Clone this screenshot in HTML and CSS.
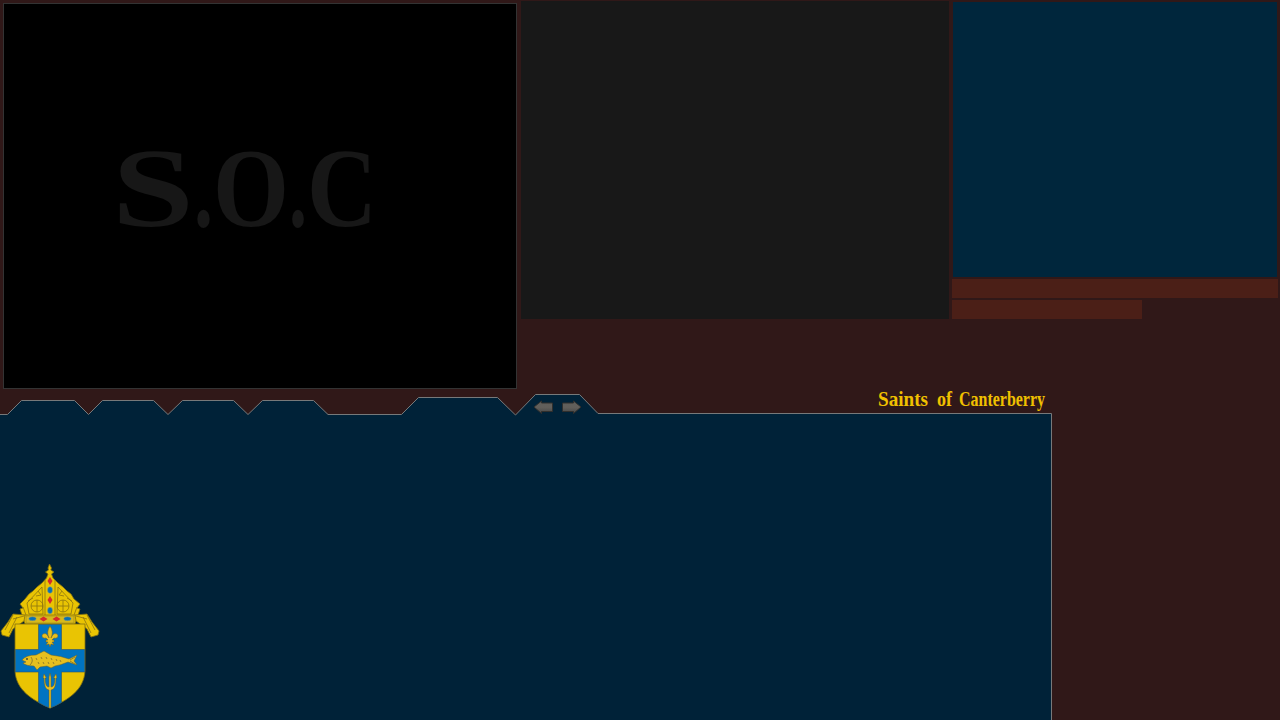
FILE: index.html
```html
<!DOCTYPE html>
<html lang="en">
<head>
<meta charset="utf-8">
<title>Saints of Canterberry</title>
<link rel="stylesheet" href="styles.css">
</head>
<body>
<main class="page">
  <section class="top">
    <div class="map">
      <svg class="monogram" width="260" height="110" viewBox="0 -20 260 110">
        <text y="76"><tspan x="-3" textLength="82" lengthAdjust="spacingAndGlyphs">S</tspan><tspan x="79" textLength="19" lengthAdjust="spacingAndGlyphs">.</tspan><tspan x="98" textLength="76" lengthAdjust="spacingAndGlyphs">O</tspan><tspan x="174" textLength="18" lengthAdjust="spacingAndGlyphs">.</tspan><tspan x="192" textLength="70" lengthAdjust="spacingAndGlyphs">C</tspan></text>
      </svg>
    </div>
    <div class="viewer"></div>
    <div class="side">
      <div class="chat"></div>
      <div class="bar"></div>
      <div class="bar bar-short"></div>
    </div>
  </section>
  <section class="console">
    <svg class="frame" width="1054" height="337" viewBox="0 383 1054 337">
      <defs>
        <linearGradient id="metal" x1="0" y1="0" x2="0" y2="1"><stop offset="0" stop-color="#5f5e5a"/><stop offset=".5" stop-color="#625f5b"/><stop offset="1" stop-color="#474746"/></linearGradient>
      </defs>
      <path class="panel" d="M-2 414.5H7.5L21.5 400.5H74.5L88.5 414.5L102.5 400.5H153.5L168 414.5L182.5 400.5H233.5L248 414.5L262.5 400.5H313.5L328 414.5H401.5L418.5 397.5H497.5L515.5 415L535.5 394.5H579.5L598 413.5H1051.5V722H-2Z"/>
      <g class="arrow" fill="url(#metal)">
        <path d="M534 407L541.500 401V403H552.500V411.500H541.500V413.500Z"/>
        <path d="M581 407L573.500 401V403H562.500V411.500H573.500V413.500Z"/>
      </g>
      <text class="title" y="406"><tspan x="878" textLength="50" lengthAdjust="spacingAndGlyphs">Saints</tspan> <tspan x="937" textLength="15" lengthAdjust="spacingAndGlyphs">of</tspan> <tspan x="959" textLength="86" lengthAdjust="spacingAndGlyphs">Canterberry</tspan></text>
    </svg>
    <svg class="crest" width="100" height="148" viewBox="0 0 100 148">
      <g class="gold">
        <path d="M49.500 1L51.500 5L50.800 7L54 9L51.500 11L53 15L58 20L63 24L67 28L71 31L74 36L80 41L77 45L80 46L75 61H25L20 46L23 45L20 41L25 36L29 31L33 28L37 24L42 20L46.500 15L48 11L45.500 9L48.500 7L48 5Z"/>
        <path d="M25 52L13 51L8 59L1 68L2 72L9 74L13 66L24 58Z"/>
        <path d="M75 52L87 51L92 59L99 68L98 72L91 74L87 66L76 58Z"/>
        <path d="M15 61H85V108C84 127 68 137 50 145C32 137 16 127 15 108Z"/>
      </g>
      <g class="detail">
        <path d="M45 17V52M55 17V52M42 24L27 40L29 51H43ZM58 24L73 40L71 51H57ZM25 52H75M23 44L26 52M77 44L74 52M13 52L5 67M17 54L9 70M87 52L95 67M83 54L91 70M13 56L24 53M87 56L76 53"/>
        <circle cx="37" cy="43" r="6"/><circle cx="63" cy="43" r="6"/>
        <path d="M37 37V49M31 43H43M63 37V49M57 43H69M38 28L41 32L36 33M62 28L59 32L64 33M28 38L33 35M72 38L67 35"/>
      </g>
      <path class="trim" d="M26 53H74V60H26Z"/>
      <path class="red" d="M50 14L52.500 18L50 22L47.500 18ZM50 33L52.500 37L50 41L47.500 37ZM39.500 56L43.500 53.500L47.500 56L43.500 58.500ZM52.500 56L56.500 53.500L60.500 56L56.500 58.500Z"/>
      <g class="blue"><ellipse cx="50" cy="27" rx="2.500" ry="3.300"/><ellipse cx="50" cy="47.500" rx="2.500" ry="3.300"/><ellipse cx="32.500" cy="55.700" rx="3.700" ry="2"/><ellipse cx="67.500" cy="55.700" rx="3.700" ry="2"/></g>
      <path class="cross" d="M38.500 61.500H61.500V86.500H84.700V109H61.500V139.500Q56 143 50 145Q44 143 38.500 139.500V109H15.300V86.500H38.500Z"/>
      <g class="charge">
        <path d="M50 63Q46 69 49 75Q46 68 42 72Q42 76 46 75L48 77H46V79H48L46 82L49 81L50 84L51 81L54 82L52 79H54V77H52L54 75Q58 76 58 72Q54 68 51 75Q54 69 50 63Z"/>
        <path d="M22 97Q26 92 36 92L44 88L51 92Q61 93 69 96L77 92L74 98L77 102L68 99Q61 102 55 103L51 105L47 103L40 104L37 107L34 103Q26 103 23 100L26 99Z"/>
        <path d="M49 114L50 110L51 114V124Q55 124 55 115H53.500L56 111L57 115H56Q56 127 51 127V145H49V127Q44 127 44 115H43L44 111L46.500 115H45Q45 124 49 124Z"/>
      </g>
      <path class="scales" d="M31 94Q34 98 30 102M36 95L37 97M41 94L42 96M46 94L47 96M51 95L52 97M56 96L57 98M38 99L39 101M43 99L44 101M48 99L49 101M53 99L54 101M60 97L61 99M70 97L75 94M70 98L75 101"/>
      <circle class="eye" cx="27" cy="96" r=".9"/>
    </svg>
  </section>
</main>
</body>
</html>
```
FILE: styles.css
```css
body {
  margin: 0;
  background: #301818;
  overflow: hidden;
}

.page {
  display: flex;
  flex-direction: column;
  box-sizing: border-box;
  width: 1280px;
  height: 720px;
}

.top {
  display: flex;
  align-items: flex-start;
  height: 393px;
  padding-left: 3px;
}

.map {
  box-sizing: border-box;
  width: 514px;
  height: 386px;
  margin: 3px 4px 0 0;
  padding: 126px 0 0 111px;
  background: #000;
  border: 1px solid #333;
}

.monogram {
  display: block;
  overflow: visible;
  fill: #171717;
  font: bold 112px "Liberation Serif", serif;
}

.viewer {
  width: 428px;
  height: 318px;
  margin-top: 1px;
  background: #181818;
}

.side {
  display: flex;
  flex-direction: column;
  width: 326px;
  margin: 2px 0 0 3px;
}

.chat {
  height: 275px;
  margin: 0 1px 2px;
  background: #00263c;
}

.bar {
  height: 19px;
  margin-bottom: 2px;
  background: #4b1f17;
}

.bar-short {
  width: 190px;
}

.console {
  position: relative;
  height: 337px;
  margin-top: -10px;
}

.frame {
  display: block;
  overflow: visible;
}

.panel {
  fill: #002238;
  stroke: #77797a;
  stroke-width: 1;
}

.arrow {
  stroke: #302f2d;
  stroke-width: 1;
}

.title {
  fill: #f0c000;
  font: bold 21px "Liberation Serif", serif;
}

.crest {
  position: absolute;
  left: 0;
  top: 180px;
}

.gold {
  fill: #e9c403;
  stroke: #806e10;
  stroke-width: .8;
}

.detail {
  fill: none;
  stroke: #8b7410;
  stroke-width: .8;
}

.trim {
  fill: #d8b91b;
  stroke: #9c861c;
  stroke-width: .6;
}

.red {
  fill: #d52b2b;
}

.blue {
  fill: #0870b5;
  stroke: #9d9f70;
  stroke-width: .5;
}

.cross {
  fill: #0074c2;
  stroke: #31516a;
  stroke-width: .6;
}

.charge {
  fill: #e6bf20;
  stroke: #665f28;
  stroke-width: .5;
}

.scales {
  fill: none;
  stroke: #80702d;
  stroke-width: .8;
}

.eye {
  fill: #3d4431;
}
```
